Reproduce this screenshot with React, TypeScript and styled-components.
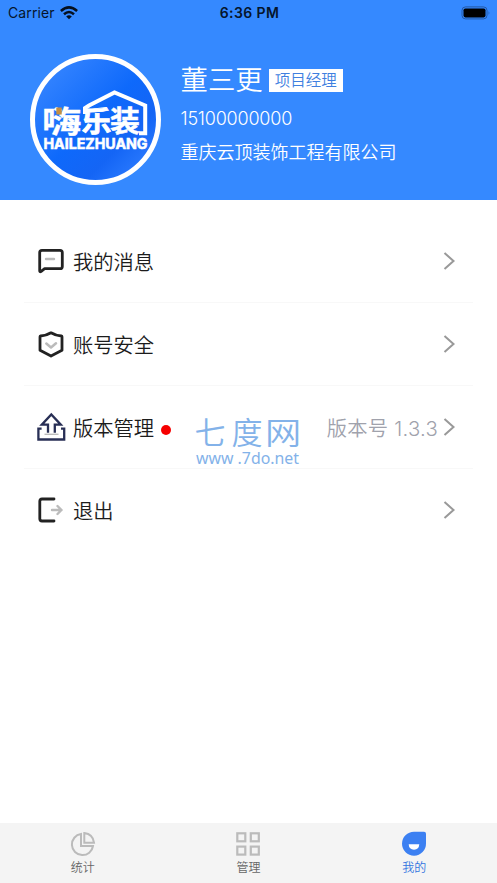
import React from "react";
import styled, { createGlobalStyle } from "styled-components";

const GlobalStyle = createGlobalStyle`
  * { box-sizing: border-box; }
  body {
    margin: 0;
    background: #fff;
    font-family: Inter, "Noto Sans CJK SC", sans-serif;
  }
`;

const Screen = styled.div`
  width: 497px;
  height: 883px;
  display: flex;
  flex-direction: column;
  overflow: hidden;
  position: relative;
  background: #fff;
`;

const Header = styled.header`
  height: 200px;
  flex: none;
  background: #3589ff;
  color: #fff;
`;

const StatusBar = styled.div`
  height: 26px;
  display: grid;
  grid-template-columns: 1fr auto 1fr;
  align-items: center;
  padding: 0 6px 1px 8px;
  color: #05152c;
  font-size: 14px;
`;

const Carrier = styled.div`
  display: flex;
  align-items: center;
  gap: 5px;
  letter-spacing: 0.1px;
`;

const Clock = styled.div`
  font-size: 14px;
  font-weight: 600;
  letter-spacing: 0.4px;
`;

const BatterySlot = styled.div`
  display: flex;
  justify-content: flex-end;
`;

const Profile = styled.div`
  display: flex;
  padding: 28px 0 0 30px;
`;

const Avatar = styled.svg`
  width: 131px;
  height: 131px;
  flex: none;
`;

const Details = styled.div`
  margin-left: 19.5px;
  padding-top: 6px;
`;

const NameRow = styled.div`
  display: flex;
  align-items: center;
  height: 40px;
`;

const Name = styled.div`
  font-size: 27.4px;
  font-weight: 350;
  line-height: 41px;
  white-space: nowrap;
`;

const RoleTag = styled.div`
  width: 74px;
  height: 23px;
  margin-left: 6px;
  background: #fff;
  color: #3f7fdf;
  font-size: 15.5px;
  font-weight: 350;
  line-height: 23px;
  text-align: center;
  white-space: nowrap;
`;

const Phone = styled.div`
  height: 36px;
  line-height: 38px;
  font-size: 18px;
  font-weight: 350;
  letter-spacing: -0.2px;
`;

const Company = styled.div`
  height: 32px;
  line-height: 34px;
  font-size: 18px;
  font-weight: 350;
  white-space: nowrap;
`;

const Menu = styled.main`
  flex: 1;
  padding: 20px 24px 0;
`;

const MenuRow = styled.div<{ $last?: boolean }>`
  height: 83px;
  display: flex;
  align-items: center;
  padding: 0 17px 0 12px;
  border-bottom: 1px solid ${(p) => (p.$last ? "transparent" : "#f8f8f8")};
`;

const RowIcon = styled.svg`
  width: 30px;
  height: 30px;
  flex: none;
`;

const Label = styled.div`
  margin-left: 7px;
  padding-top: 3px;
  font-size: 20.3px;
  font-weight: 350;
  line-height: 30px;
  color: #1c1c1c;
`;

const Dot = styled.div`
  width: 10px;
  height: 10px;
  margin: 6px 0 0 6.5px;
  border-radius: 50%;
  background: #f60000;
`;

const RowEnd = styled.div`
  margin-left: auto;
  display: flex;
  align-items: center;
  gap: 4px;
`;

const Version = styled.div`
  padding-top: 3px;
  font-size: 20.3px;
  font-weight: 350;
  line-height: 30px;
  letter-spacing: 0.25px;
  color: #a0a2ac;
  white-space: nowrap;
`;

const Arrow = styled.svg`
  width: 14px;
  height: 20px;
`;

const Watermark = styled.div`
  position: absolute;
  left: 195px;
  top: 410px;
  width: 110px;
  height: 64px;
`;

const TabBar = styled.nav`
  height: 60px;
  flex: none;
  display: grid;
  grid-template-columns: repeat(3, 1fr);
  background: #f4f4f4;
`;

const Tab = styled.div<{ $active?: boolean }>`
  display: flex;
  flex-direction: column;
  align-items: center;
  padding-top: 7px;
  font-size: 12px;
  font-weight: 350;
  line-height: 20px;
  color: ${(p) => (p.$active ? "#3274e0" : "#666")};
`;

const TabIcon = styled.svg`
  width: 28px;
  height: 28px;
`;

const Chevron = () => (
  <Arrow viewBox="0 0 14 20" fill="none" stroke="#999" strokeWidth="2">
    <path d="M2.5 2 11.5 10 2.5 18" />
  </Arrow>
);

const MessageIcon = () => (
  <RowIcon viewBox="0 0 30 30" fill="none" strokeLinejoin="round" strokeLinecap="round">
    <path d="M6 4.3H24Q26.3 4.3 26.3 6.6V20.4Q26.3 22.7 24 22.7H8.6L4.9 25.6Q3.7 26.2 3.7 24.8V6.6Q3.7 4.3 6 4.3Z" stroke="#222" strokeWidth="2.8" />
    <path d="M10 13H18" stroke="#bbb" strokeWidth="2.4" />
  </RowIcon>
);

const ShieldIcon = () => (
  <RowIcon viewBox="0 0 30 30" fill="none" strokeLinejoin="round" strokeLinecap="round">
    <path d="M15 3.8Q19.5 6.6 25.4 7Q26 7.1 26 7.8V21.2L15 27 4 21.2V7.8Q4 7.1 4.6 7Q10.5 6.6 15 3.8Z" stroke="#222" strokeWidth="2.8" />
    <path d="M10.3 14.5 15 18.5 20 14.2" stroke="#bbb" strokeWidth="2.5" />
  </RowIcon>
);

const UploadIcon = () => (
  <RowIcon viewBox="0 0 30 30" fill="none" stroke="#282f55" strokeWidth="2.3">
    <path d="M12 20.8V12.6H5.8L15.3 2.4 24.8 12.6H18.8V20.8" />
    <path d="M5.6 16.6H2.4V27.5H28.2V16.6H25" />
    <path d="M8.5 22.3H22.5" stroke="#bbb" strokeWidth="1.4" />
  </RowIcon>
);

const LogoutIcon = () => (
  <RowIcon viewBox="0 0 30 30" fill="none" strokeLinejoin="round" strokeLinecap="round">
    <path d="M18 4H6Q3.8 4 3.8 6.2V23.8Q3.8 26 6 26H18" stroke="#222" strokeWidth="2.8" />
    <path d="M16 15H25.5M21.5 11 25.5 15 21.5 19" stroke="#bbb" strokeWidth="2.4" />
  </RowIcon>
);

const items = [
  { label: "我的消息", Icon: MessageIcon },
  { label: "账号安全", Icon: ShieldIcon },
  { label: "版本管理", Icon: UploadIcon, version: "版本号 1.3.3" },
  { label: "退出", Icon: LogoutIcon },
];

export default function App() {
  return (
    <Screen>
      <GlobalStyle />
      <Header>
        <StatusBar>
          <Carrier>
            Carrier
            <svg width="18" height="14" viewBox="0 0 18 14" fill="none" stroke="#05101f" strokeWidth="2.5">
              <path d="M.9 5Q9-2.2 17.1 5" />
              <path d="M4 8.3Q9 3.8 14 8.3" />
              <path d="M9 13.2 6.2 10.4Q9 8 11.8 10.4Z" fill="#05101f" stroke="none" />
            </svg>
          </Carrier>
          <Clock>6:36 PM</Clock>
          <BatterySlot>
            <svg width="30" height="14" viewBox="0 0 30 14">
              <rect x="1" y=".9" width="25" height="12" rx="3.5" fill="none" stroke="#2458a4" />
              <rect x="2.5" y="2.4" width="22" height="9" rx="1.8" fill="#000" />
              <path d="M27.6 5Q29.3 7 27.6 9Z" fill="#2458a4" />
            </svg>
          </BatterySlot>
        </StatusBar>
        <Profile>
          <Avatar viewBox="0 0 131 131">
            <defs>
              <linearGradient id="disc" x1="0.1" y1="0.1" x2="0.9" y2="0.9">
                <stop offset="0" stopColor="#3685ff" />
                <stop offset="0.5" stopColor="#0e69fb" />
                <stop offset="0.75" stopColor="#1465f5" />
                <stop offset="1" stopColor="#2c7cff" />
              </linearGradient>
            </defs>
            <circle cx="65.5" cy="65.5" r="63" fill="url(#disc)" stroke="#fff" strokeWidth="5" />
            <path d="M55 60V54L59 51.5 84.5 38.5 115.2 51.5V79.2H109" fill="none" stroke="#fff" strokeWidth="4" />
            <g fill="#fff" fontFamily="'Noto Sans CJK SC', sans-serif" fontWeight="700">
              <text transform="translate(12 78.4) scale(1.34 1)" fontSize="29.5" stroke="#fff" strokeWidth=".3">嗨</text>
              <text transform="translate(51.5 78.4) scale(1.07 1)" fontSize="28" stroke="#fff" strokeWidth=".8">乐</text>
              <text transform="translate(80 78.4) scale(1.03 1)" fontSize="29" stroke="#fff" strokeWidth=".5">装</text>
            </g>
            <rect x="26.3" y="53.5" width="5.4" height="7" fill="#c58f43" />
            <text x="13.5" y="95" fill="#fff" stroke="#fff" strokeWidth=".6" fontFamily="Inter, sans-serif" fontWeight="700" fontSize="14.8" textLength="104" lengthAdjust="spacingAndGlyphs">HAILEZHUANG</text>
          </Avatar>
          <Details>
            <NameRow>
              <Name>董三更</Name>
              <RoleTag>项目经理</RoleTag>
            </NameRow>
            <Phone>15100000000</Phone>
            <Company>重庆云顶装饰工程有限公司</Company>
          </Details>
        </Profile>
      </Header>
      <Menu>
        {items.map(({ label, Icon, version }, i) => (
          <MenuRow key={label} $last={i === items.length - 1}>
            <Icon />
            <Label>{label}</Label>
            {version && <Dot />}
            <RowEnd>
              {version && <Version>{version}</Version>}
              <Chevron />
            </RowEnd>
          </MenuRow>
        ))}
      </Menu>
      <Watermark>
        <svg width="110" height="64" viewBox="0 0 110 64" fill="#83b2e9">
          <g fontFamily="'Noto Sans CJK SC', sans-serif" fontSize="31" fontWeight="350">
            <text x="-0.5" y="34.3">七</text>
            <text x="36.5" y="34.3">度</text>
            <text transform="translate(70 34.3) scale(1.17 1)">网</text>
          </g>
          <text x="1" y="53.5" fontFamily="'Noto Sans', sans-serif" fontSize="16" textLength="103" lengthAdjust="spacingAndGlyphs">www .7do.net</text>
        </svg>
      </Watermark>
      <TabBar>
        <Tab>
          <TabIcon viewBox="0 0 28 28" fill="none" stroke="#bbb" strokeWidth="2">
            <path d="M12 4A10.6 10.6 0 1 0 24 16H12Z" />
            <path d="M15.3 3V12.7H25Q24 4 15.3 3Z" />
          </TabIcon>
          统计
        </Tab>
        <Tab>
          <TabIcon viewBox="0 0 28 28" fill="none" stroke="#bbb" strokeWidth="2.2">
            <rect x="3.3" y="3.3" width="8" height="8" />
            <rect x="16.8" y="3.3" width="8" height="8" />
            <rect x="3.3" y="16.6" width="8" height="8" />
            <rect x="16.8" y="16.6" width="8" height="8" />
          </TabIcon>
          管理
        </Tab>
        <Tab $active>
          <TabIcon viewBox="0 0 28 28">
            <path d="M14 1.7H24Q26 1.7 26 3.7V13.5A12 12 0 1 1 14 1.7Z" fill="#3c80f2" />
            <path d="M8.7 14.3H19.3Q19 19.7 14 19.7T8.7 14.3Z" fill="#fff" />
          </TabIcon>
          我的
        </Tab>
      </TabBar>
    </Screen>
  );
}
